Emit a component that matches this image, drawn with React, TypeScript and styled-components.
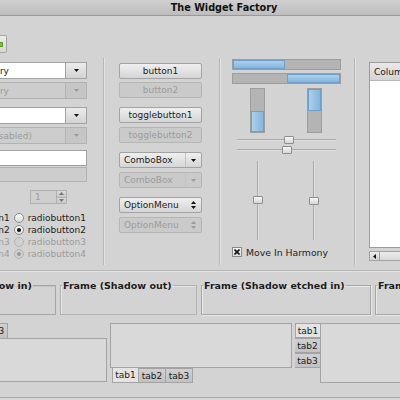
import React from "react";
import styled, { createGlobalStyle } from "styled-components";

const GlobalStyle = createGlobalStyle`
  html, body {
    margin: 0;
    padding: 0;
    overflow: hidden;
    background: #d3d3d3;
  }
  body {
    font-family: "DejaVu Sans", "Liberation Sans", sans-serif;
    font-size: 9px;
    color: #1c1c1c;
  }
  * { box-sizing: border-box; }
`;

const TEXT = "#1c1c1c";
const DIM = "#9b9b9b";

// the window is wider than the shot, so it starts left of the viewport
const Window = styled.div`
  width: 648px;
  height: 400px;
  margin-left: -100px;
  display: flex;
  flex-direction: column;
  background: #d3d3d3;
`;

const TitleBar = styled.div`
  height: 16px;
  flex: none;
  display: flex;
  align-items: center;
  justify-content: center;
  background: linear-gradient(#d0d0d0, #bdbdbd);
  border-bottom: 1px solid #999;
  font-weight: bold;
  font-size: 9.7px;
  color: #111;
`;

const ToolRow = styled.div`
  height: 42px;
  flex: none;
  padding: 19px 0 0 83px;
`;

const ColorButton = styled.div`
  width: 24px;
  height: 18px;
  border: 1px solid #a4a4a4;
  border-radius: 2px;
  background: linear-gradient(#ededed, #d6d6d6);
  display: flex;
  align-items: center;
  justify-content: center;
`;

const Swatch = styled.span`
  width: 16px;
  height: 5px;
  background: #7dbd3e;
  border: 1px solid #5c9a27;
`;

const MainRow = styled.div`
  height: 207px;
  flex: none;
  display: flex;
  padding-left: 20px;
`;

const Column = styled.div<{ $w: number; $end?: boolean }>`
  width: ${(p) => p.$w}px;
  flex: none;
  display: flex;
  flex-direction: column;
  align-items: ${(p) => (p.$end ? "flex-end" : "stretch")};
`;

const VSeparator = styled.div<{ $l: number; $r: number }>`
  width: 2px;
  flex: none;
  margin: 0 ${(p) => p.$r}px 0 ${(p) => p.$l}px;
  border-left: 1px solid #b7b7b7;
  border-right: 1px solid #e2e2e2;
`;

const HSeparator = styled.div`
  height: 2px;
  flex: none;
  margin-top: 5px;
  border-top: 1px solid #b7b7b7;
  border-bottom: 1px solid #e2e2e2;
`;

/* ---------- column 1 ---------- */

const ComboEntry = styled.div<{ $mt: number }>`
  width: 104px;
  height: 17px;
  margin-top: ${(p) => p.$mt}px;
  display: flex;
`;

const EntryField = styled.div<{
  $disabled?: boolean;
  $mt?: number;
  $h?: number;
  $w?: number;
  $pad?: number;
}>`
  flex: ${(p) => (p.$w ? "none" : "1")};
  width: ${(p) => (p.$w ? `${p.$w}px` : "auto")};
  height: ${(p) => (p.$h ? `${p.$h}px` : "auto")};
  margin-top: ${(p) => p.$mt ?? 0}px;
  padding-left: ${(p) => p.$pad ?? 3}px;
  display: flex;
  align-items: center;
  white-space: nowrap;
  overflow: hidden;
  border: 1px solid ${(p) => (p.$disabled ? "#b2b2b2" : "#a2a2a2")};
  background: ${(p) => (p.$disabled ? "#cdcdcd" : "#fff")};
  color: ${(p) => (p.$disabled ? DIM : TEXT)};
`;

const ArrowButton = styled.div<{ $disabled?: boolean }>`
  width: 21px;
  flex: none;
  display: flex;
  align-items: center;
  justify-content: center;
  border: 1px solid ${(p) => (p.$disabled ? "#b2b2b2" : "#a2a2a2")};
  border-left: none;
  background: ${(p) =>
    p.$disabled ? "#c6c6c6" : "linear-gradient(#ececec, #d3d3d3)"};
`;

const Spin = styled.div`
  width: 37px;
  height: 14px;
  margin: 8px 20px 0 0;
  display: flex;
  border: 1px solid #b0b0b0;
`;

const SpinText = styled.div`
  flex: 1;
  padding-left: 4px;
  display: flex;
  align-items: center;
  color: ${DIM};
  background: #cfcfcf;
`;

const SpinButtons = styled.div`
  width: 10px;
  display: flex;
  flex-direction: column;
  border-left: 1px solid #b0b0b0;
`;

const SpinHalf = styled.div`
  flex: 1;
  display: flex;
  align-items: center;
  justify-content: center;
  background: linear-gradient(#dadada, #c8c8c8);
  & + & { border-top: 1px solid #b0b0b0; }
`;

const ToggleRow = styled.div<{ $mt?: number }>`
  height: 12px;
  margin: ${(p) => p.$mt ?? 0}px 1px 0 0;
  display: flex;
  align-items: center;
  white-space: nowrap;
`;

const ToggleLabel = styled.span<{ $disabled?: boolean; $gap: number }>`
  margin: 0 ${(p) => p.$gap}px 0 4px;
  color: ${(p) => (p.$disabled ? DIM : TEXT)};
`;

const RadioCircle = styled.span<{ $on?: boolean; $disabled?: boolean }>`
  width: 10px;
  height: 10px;
  flex: none;
  position: relative;
  border-radius: 50%;
  border: 1px solid ${(p) => (p.$disabled ? "#b4b4b4" : "#8c8c8c")};
  background: ${(p) =>
    p.$disabled ? "#d0d0d0" : "linear-gradient(#fbfbfb, #dcdcdc)"};
  &::after {
    content: "";
    display: ${(p) => (p.$on ? "block" : "none")};
    position: absolute;
    left: 2px;
    top: 2px;
    width: 4px;
    height: 4px;
    border-radius: 50%;
    background: ${(p) => (p.$disabled ? "#9a9a9a" : "#111")};
  }
`;

const CheckBox = styled.span<{ $disabled?: boolean }>`
  width: 10px;
  height: 10px;
  flex: none;
  display: flex;
  align-items: center;
  justify-content: center;
  border: 1px solid ${(p) => (p.$disabled ? "#b4b4b4" : "#8a8a8a")};
  background: ${(p) =>
    p.$disabled ? "#d0d0d0" : "linear-gradient(#f6f6f6, #dedede)"};
`;

/* ---------- column 2 ---------- */

const PushButton = styled.div<{ $mt: number; $disabled?: boolean; $left?: boolean }>`
  height: 16px;
  margin-top: ${(p) => p.$mt}px;
  display: flex;
  align-items: center;
  justify-content: ${(p) => (p.$left ? "flex-start" : "center")};
  padding-left: ${(p) => (p.$left ? 4 : 0)}px;
  border: 1px solid ${(p) => (p.$disabled ? "#b5b5b5" : "#a3a3a3")};
  border-radius: 2px;
  background: ${(p) =>
    p.$disabled ? "#cacaca" : "linear-gradient(#efefef, #d5d5d5)"};
  color: ${(p) => (p.$disabled ? DIM : TEXT)};
  white-space: nowrap;
`;

const ButtonText = styled.span`
  flex: 1;
`;

const ComboArrow = styled.span<{ $divider?: boolean }>`
  width: 16px;
  height: 100%;
  display: flex;
  align-items: center;
  justify-content: center;
  border-left: 1px solid ${(p) => (p.$divider ? "#c2c2c2" : "transparent")};
`;

/* ---------- column 3 ---------- */

const HTrough = styled.div<{ $mt: number; $end?: boolean }>`
  height: 11px;
  margin-top: ${(p) => p.$mt}px;
  display: flex;
  justify-content: ${(p) => (p.$end ? "flex-end" : "flex-start")};
  background: #b4b4b4;
  border: 1px solid #9d9d9d;
`;

const HFill = styled.div`
  height: 100%;
  background: linear-gradient(#acd0ec, #85b5dd);
  border: 1px solid #6f9fcb;
`;

const PairRow = styled.div<{ $mt: number; $pl: number; $gap: number; $h: number }>`
  height: ${(p) => p.$h}px;
  margin-top: ${(p) => p.$mt}px;
  padding-left: ${(p) => p.$pl}px;
  display: flex;
  gap: ${(p) => p.$gap}px;
`;

const VTrough = styled.div<{ $end?: boolean }>`
  width: 15px;
  height: 100%;
  display: flex;
  flex-direction: column;
  justify-content: ${(p) => (p.$end ? "flex-end" : "flex-start")};
  background: #b4b4b4;
  border: 1px solid #9d9d9d;
`;

const VFill = styled.div`
  width: 100%;
  background: linear-gradient(90deg, #acd0ec, #85b5dd);
  border: 1px solid #6f9fcb;
`;

const HScale = styled.div<{ $mt: number }>`
  position: relative;
  height: 8px;
  margin: ${(p) => p.$mt}px 5px 0 5px;
`;

const HTrack = styled.div`
  position: absolute;
  left: 0;
  right: 0;
  top: 3px;
  height: 2px;
  background: #a9a9a9;
  border-bottom: 1px solid #dedede;
`;

const VScale = styled.div`
  position: relative;
  width: 10px;
  height: 100%;
`;

const VTrack = styled.div`
  position: absolute;
  top: 0;
  bottom: 0;
  left: 4px;
  width: 2px;
  background: #a9a9a9;
  border-right: 1px solid #dedede;
`;

const Knob = styled.div`
  position: absolute;
  width: 10px;
  height: 8px;
  border: 1px solid #8e8e8e;
  border-radius: 1px;
  background: linear-gradient(#f6f6f6, #d6d6d6);
`;

const CheckRow = styled.div`
  margin-top: 7px;
  height: 10px;
  display: flex;
  align-items: center;
  gap: 4px;
  font-size: 9.3px;
`;

/* ---------- column 4 ---------- */

const TreeBox = styled.div`
  margin-top: 4px;
  height: 186px;
  border: 1px solid #9c9c9c;
  background: #fff;
`;

const TreeHeader = styled.div`
  width: 110px;
  height: 18px;
  padding-left: 4px;
  display: flex;
  align-items: center;
  background: linear-gradient(#e9e9e9, #d4d4d4);
  border-bottom: 1px solid #b6b6b6;
  border-right: 1px solid #b6b6b6;
`;

const HScrollbar = styled.div`
  margin-top: 3px;
  height: 10px;
  display: flex;
  border: 1px solid #a2a2a2;
  background: #cbcbcb;
`;

const Stepper = styled.div`
  width: 10px;
  display: flex;
  align-items: center;
  justify-content: center;
  border-right: 1px solid #a2a2a2;
  background: linear-gradient(#ececec, #d2d2d2);
`;

const ScrollSlider = styled.div`
  flex: 1;
  background: linear-gradient(#ebebeb, #d9d9d9);
`;

/* ---------- frames ---------- */

const FramesRow = styled.div`
  height: 35px;
  flex: none;
  margin-top: 8px;
  padding-left: 28px;
  display: flex;
  gap: 4px;
`;

const Frame = styled.fieldset<{ $w: number; $shadow: "in" | "out" | "etched-in" | "etched-out" }>`
  width: ${(p) => p.$w}px;
  flex: none;
  margin: 0;
  padding: 0;
  min-width: 0;
  border: 1px solid ${(p) => (p.$shadow === "out" ? "#b2b2b2" : "#a6a6a6")};
  box-shadow: ${(p) =>
    p.$shadow === "in"
      ? "inset 1px 1px 0 #c4c4c4"
      : p.$shadow === "out"
      ? "inset 1px 1px 0 #e6e6e6"
      : "inset 1px 1px 0 #e8e8e8, 1px 1px 0 #e8e8e8"};
`;

const FrameLabel = styled.legend`
  margin-left: 1px;
  padding: 0 1px;
  line-height: 11px;
  font-size: 9.5px;
  font-weight: bold;
  white-space: nowrap;
`;

/* ---------- notebooks ---------- */

const NotebookRow = styled.div`
  height: 60px;
  flex: none;
  margin-top: 8px;
  padding-left: 25px;
  display: flex;
  gap: 3px;
`;

const Notebook = styled.div<{ $row?: boolean }>`
  display: flex;
  flex-direction: ${(p) => (p.$row ? "row" : "column")};
  align-items: flex-start;
`;

const TabStrip = styled.div<{ $vertical?: boolean }>`
  display: flex;
  flex-direction: ${(p) => (p.$vertical ? "column" : "row")};
  padding-left: ${(p) => (p.$vertical ? 0 : 2)}px;
`;

const Tab = styled.div<{ $active?: boolean; $side: "top" | "bottom" | "left" }>`
  width: ${(p) => (p.$side === "left" ? 25 : 27)}px;
  height: 15px;
  display: flex;
  align-items: center;
  justify-content: center;
  border: 1px solid #a3a3a3;
  ${(p) => (p.$side === "top" ? "border-bottom: none;" : "")}
  ${(p) => (p.$side === "bottom" ? "border-top: none;" : "")}
  ${(p) => (p.$side === "left" ? "border-right: none;" : "")}
  & + & {
    ${(p) => (p.$side === "left" ? "border-top: 1px solid #a3a3a3;" : "border-left: none;")}
  }
  background: ${(p) =>
    p.$active ? "#e4e4e4" : "linear-gradient(#d0d0d0, #c2c2c2)"};
`;

const Page = styled.div<{ $w: number; $h: number }>`
  width: ${(p) => p.$w}px;
  height: ${(p) => p.$h}px;
  background: #d9d9d9;
  border: 1px solid #a3a3a3;
`;

const BottomEdge = styled.div`
  margin-top: 14px;
  flex: 1;
  border-top: 1px solid #ababab;
  background: #d6d6d6;
`;

/* ---------- drawings ---------- */

function Tri({ dir, color = "#111" }: { dir: "up" | "down" | "left"; color?: string }) {
  const d =
    dir === "down" ? "M0 0h5L2.5 3z" : dir === "up" ? "M0 3h5L2.5 0z" : "M3 0v5L0 2.5z";
  const side = dir === "left";
  return (
    <svg width={side ? 3 : 5} height={side ? 5 : 3} viewBox={side ? "0 0 3 5" : "0 0 5 3"}>
      <path d={d} fill={color} />
    </svg>
  );
}

function UpDown({ color = "#111" }: { color?: string }) {
  return (
    <svg width="5" height="8" viewBox="0 0 5 8">
      <path d="M0 3h5L2.5 0z M0 5h5L2.5 8z" fill={color} />
    </svg>
  );
}

function Cross() {
  return (
    <svg width="6" height="6" viewBox="0 0 6 6">
      <path d="M0.5 0.5L5.5 5.5M5.5 0.5L0.5 5.5" stroke="#111" strokeWidth="1.6" />
    </svg>
  );
}

const combos = [
  { text: "Entry", disabled: false, mt: 4, pad: 1 },
  { text: "Entry", disabled: true, mt: 3, pad: 1 },
  { text: "", disabled: false, mt: 8, pad: 3 },
  { text: "(disabled)", disabled: true, mt: 3, pad: 3 },
];

const toggles = [
  { n: 1, on: false, disabled: false },
  { n: 2, on: true, disabled: false },
  { n: 3, on: false, disabled: true },
  { n: 4, on: true, disabled: true },
];

export default function App() {
  return (
    <>
      <GlobalStyle />
      <Window>
        <TitleBar>The Widget Factory</TitleBar>
        <ToolRow>
          <ColorButton>
            <Swatch />
          </ColorButton>
        </ToolRow>

        <MainRow>
          <Column $w={167} $end>
            {combos.map((c, i) => (
              <ComboEntry key={i} $mt={c.mt}>
                <EntryField $disabled={c.disabled} $pad={c.pad}>
                  {c.text}
                </EntryField>
                <ArrowButton $disabled={c.disabled}>
                  <Tri dir="down" color={c.disabled ? DIM : "#111"} />
                </ArrowButton>
              </ComboEntry>
            ))}
            <EntryField $w={104} $h={16} $mt={6} />
            <EntryField $w={104} $h={15} $mt={1} $disabled />
            <Spin>
              <SpinText>1</SpinText>
              <SpinButtons>
                <SpinHalf>
                  <Tri dir="up" color="#777" />
                </SpinHalf>
                <SpinHalf>
                  <Tri dir="down" color="#777" />
                </SpinHalf>
              </SpinButtons>
            </Spin>
            {toggles.map((t, i) => (
              <ToggleRow key={t.n} $mt={i === 0 ? 8 : 0}>
                <CheckBox $disabled={t.disabled} />
                <ToggleLabel $disabled={t.disabled} $gap={4}>
                  checkbutton{t.n}
                </ToggleLabel>
                <RadioCircle $on={t.on} $disabled={t.disabled} />
                <ToggleLabel $disabled={t.disabled} $gap={0}>
                  radiobutton{t.n}
                </ToggleLabel>
              </ToggleRow>
            ))}
          </Column>

          <VSeparator $l={16} $r={14} />

          <Column $w={83}>
            <PushButton $mt={5}>button1</PushButton>
            <PushButton $mt={3} $disabled>button2</PushButton>
            <PushButton $mt={9}>togglebutton1</PushButton>
            <PushButton $mt={4} $disabled>togglebutton2</PushButton>
            <PushButton $mt={9} $left>
              <ButtonText>ComboBox</ButtonText>
              <ComboArrow $divider>
                <Tri dir="down" />
              </ComboArrow>
            </PushButton>
            <PushButton $mt={4} $left $disabled>
              <ButtonText>ComboBox</ButtonText>
              <ComboArrow $divider>
                <Tri dir="down" color={DIM} />
              </ComboArrow>
            </PushButton>
            <PushButton $mt={9} $left>
              <ButtonText>OptionMenu</ButtonText>
              <ComboArrow>
                <UpDown />
              </ComboArrow>
            </PushButton>
            <PushButton $mt={4} $left $disabled>
              <ButtonText>OptionMenu</ButtonText>
              <ComboArrow>
                <UpDown color={DIM} />
              </ComboArrow>
            </PushButton>
          </Column>

          <VSeparator $l={17} $r={11} />

          <Column $w={109}>
            <HTrough $mt={1}>
              <HFill style={{ width: "49%" }} />
            </HTrough>
            <HTrough $mt={3} $end>
              <HFill style={{ width: "50%" }} />
            </HTrough>
            <PairRow $mt={4} $pl={18} $gap={42} $h={45}>
              <VTrough $end>
                <VFill style={{ height: "50%" }} />
              </VTrough>
              <VTrough>
                <VFill style={{ height: "51%" }} />
              </VTrough>
            </PairRow>
            <HScale $mt={3}>
              <HTrack />
              <Knob style={{ left: 47, top: 0 }} />
            </HScale>
            <HScale $mt={2}>
              <HTrack />
              <Knob style={{ left: 45, top: 0 }} />
            </HScale>
            <PairRow $mt={7} $pl={21} $gap={46} $h={79}>
              <VScale>
                <VTrack />
                <Knob style={{ left: 0, top: 35 }} />
              </VScale>
              <VScale>
                <VTrack />
                <Knob style={{ left: 0, top: 36 }} />
              </VScale>
            </PairRow>
            <CheckRow>
              <CheckBox>
                <Cross />
              </CheckBox>
              Move In Harmony
            </CheckRow>
          </Column>

          <VSeparator $l={13} $r={13} />

          <Column $w={170}>
            <TreeBox>
              <TreeHeader>Column</TreeHeader>
            </TreeBox>
            <HScrollbar>
              <Stepper>
                <Tri dir="left" />
              </Stepper>
              <ScrollSlider />
            </HScrollbar>
          </Column>
        </MainRow>

        <HSeparator />

        <FramesRow>
          <Frame $w={128} $shadow="in">
            <FrameLabel>Frame (Shadow in)</FrameLabel>
          </Frame>
          <Frame $w={137} $shadow="out">
            <FrameLabel>Frame (Shadow out)</FrameLabel>
          </Frame>
          <Frame $w={170} $shadow="etched-in">
            <FrameLabel>Frame (Shadow etched in)</FrameLabel>
          </Frame>
          <Frame $w={170} $shadow="etched-out">
            <FrameLabel>Frame (Shadow etched out)</FrameLabel>
          </Frame>
        </FramesRow>

        <NotebookRow>
          <Notebook>
            <TabStrip>
              <Tab $side="top" $active>tab1</Tab>
              <Tab $side="top">tab2</Tab>
              <Tab $side="top">tab3</Tab>
            </TabStrip>
            <Page $w={182} $h={44} />
          </Notebook>
          <Notebook>
            <Page $w={182} $h={45} />
            <TabStrip>
              <Tab $side="bottom" $active>tab1</Tab>
              <Tab $side="bottom">tab2</Tab>
              <Tab $side="bottom">tab3</Tab>
            </TabStrip>
          </Notebook>
          <Notebook $row>
            <TabStrip $vertical>
              <Tab $side="left" $active>tab1</Tab>
              <Tab $side="left">tab2</Tab>
              <Tab $side="left">tab3</Tab>
            </TabStrip>
            <Page $w={180} $h={60} />
          </Notebook>
        </NotebookRow>

        <BottomEdge />
      </Window>
    </>
  );
}
